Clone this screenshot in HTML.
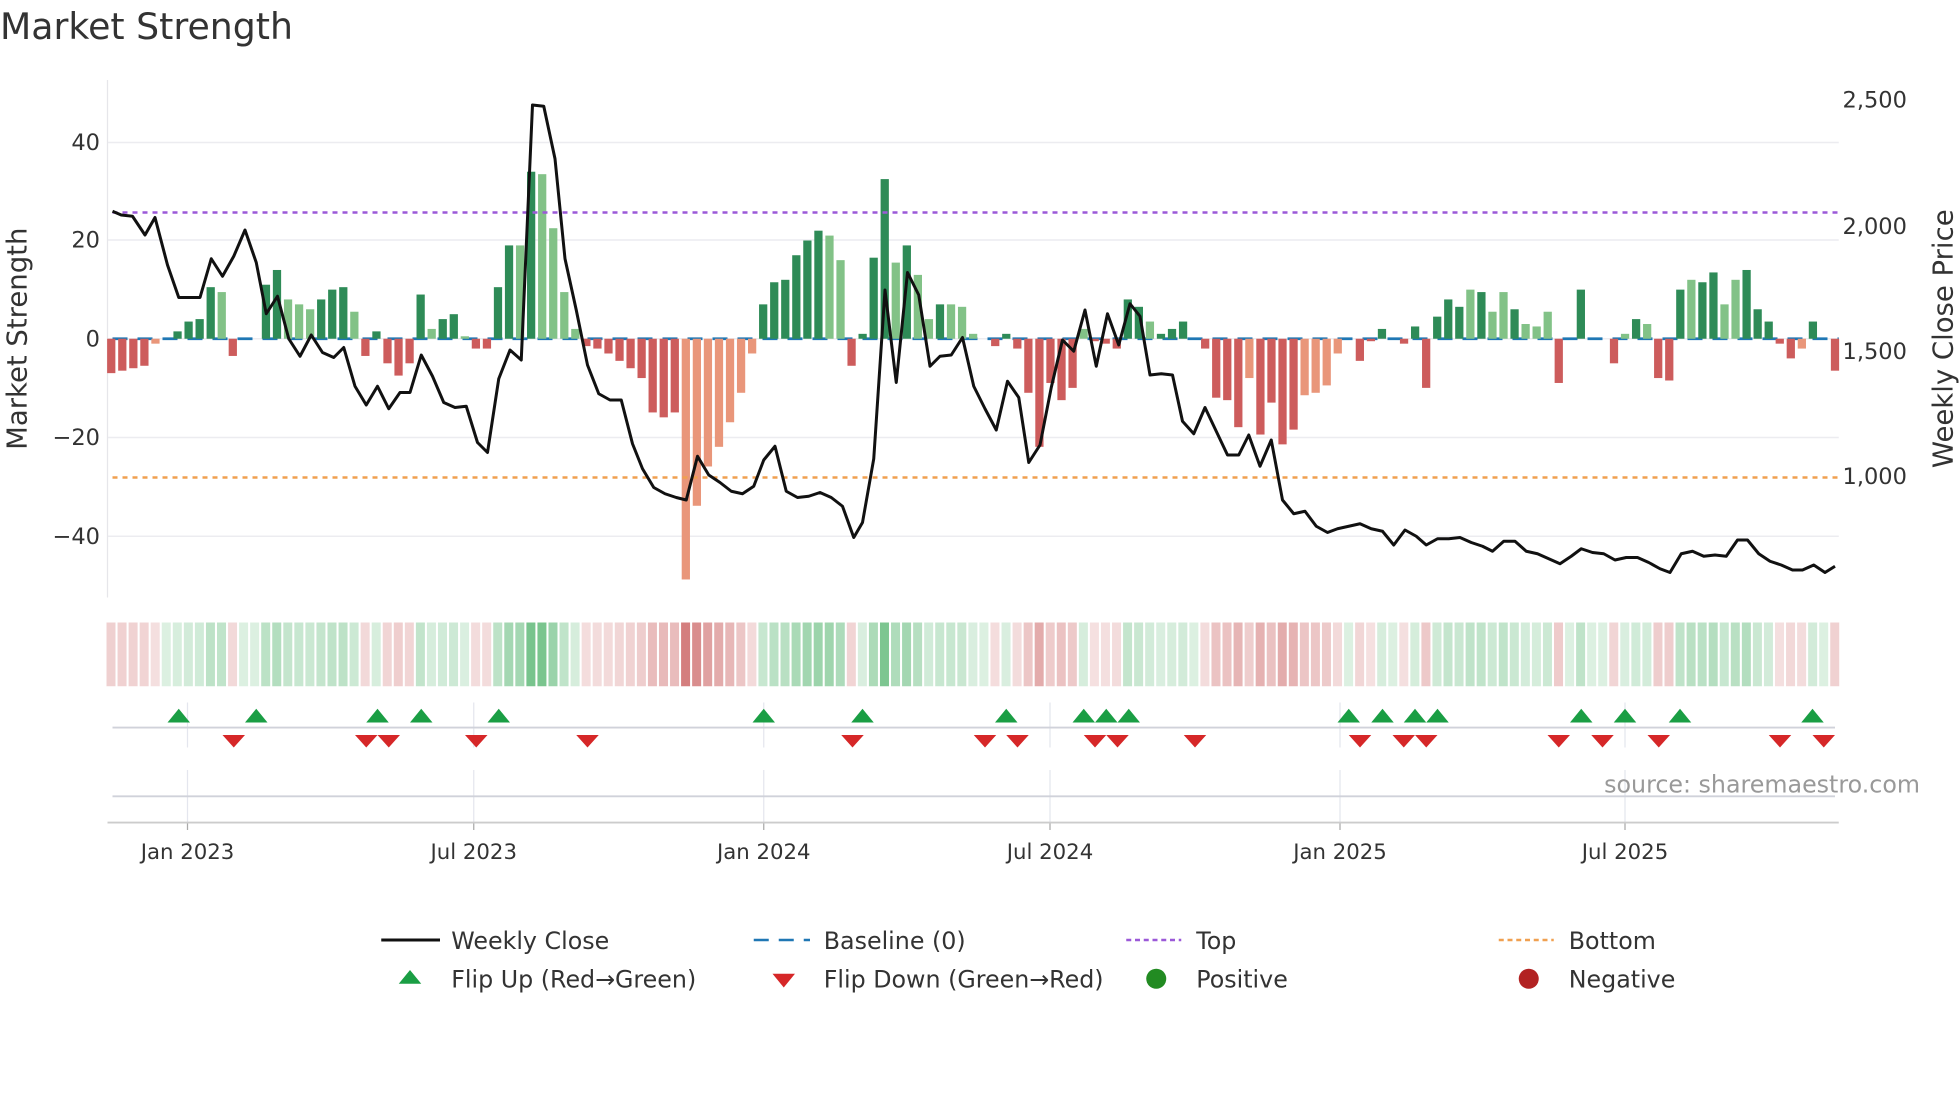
<!DOCTYPE html>
<html><head><meta charset="utf-8"><style>
html,body{margin:0;padding:0;background:#fff;}
svg{display:block;font-family:"DejaVu Sans","Liberation Sans",sans-serif;}
</style></head><body>
<svg id="s" width="1960" height="1102" viewBox="0 0 1568 881.6" xmlns="http://www.w3.org/2000/svg">
<text x="0" y="31" font-size="29" fill="#333">Market Strength</text>
<g id="g"></g>
</svg>
<script>
const g=document.getElementById('g');
let h='';
function T(x,y,t,o){h+=`<text x="${x}" y="${y}" ${o||''}>${t}</text>`;}
[114,192,271,350,429].forEach(y=>h+=`<line x1="86" x2="1471" y1="${y}" y2="${y}" stroke="#ececf0" stroke-width="1.2"/>`);
h+=`<line x1="86" x2="86" y1="64" y2="478" stroke="#e6e6ea" stroke-width="1"/>`;
[[114,'40'],[192,'20'],[271,'0'],[350,'−20'],[429,'−40']].forEach(a=>T(80,a[0]+6,a[1],'font-size="18" fill="#333" text-anchor="end"'));
[[80,'2,500'],[181,'2,000'],[281,'1,500'],[381,'1,000']].forEach(a=>T(1474,a[0]+6,a[1],'font-size="18" fill="#333"'));
T(0,0,'Market Strength','font-size="22" fill="#333" text-anchor="middle" transform="translate(21,271) rotate(-90)"');
T(0,0,'Weekly Close Price','font-size="22" fill="#333" text-anchor="middle" transform="translate(1562,271) rotate(-90)"');
h+=`<line x1="90" x2="1471" y1="271" y2="271" stroke="#1f77b4" stroke-width="2.2" stroke-dasharray="12,8"/>`;
const v=[-7,-6.5,-6,-5.5,-1,0,1.5,3.5,4,10.5,9.5,-3.5,0,0,11,14,8,7,6,8,10,10.5,5.5,-3.5,1.5,-5,-7.5,-5,9,2,4,5,0.5,-2,-2,10.5,19,19,34,33.5,22.5,9.5,2,-1.5,-2,-3,-4.5,-6,-8,-15,-16,-15,-49,-34,-26,-22,-17,-11,-3,7,11.5,12,17,20,22,21,16,-5.5,1,16.5,32.5,15.5,19,13,4,7,7,6.5,1,0,-1.5,1,-2,-11,-22,-9,-12.5,-10,2,-0.5,-1,-2,8,6.5,3.5,1,2,3.5,0,-2,-12,-12.5,-18,-8,-19.5,-13,-21.5,-18.5,-11.5,-11,-9.5,-3,0,-4.5,-0.5,2,0,-1,2.5,-10,4.5,8,6.5,10,9.5,5.5,9.5,6,3,2.5,5.5,-9,0,10,0,0,-5,1,4,3,-8,-8.5,10,12,11.5,13.5,7,12,14,6,3.5,-1,-4,-2,3.5,0,-6.5];
const n=v.length, x0=89, dx=(1468-89)/(n-1);
const light=new Set([4,10,16,17,18,22,29,32,37,39,40,41,42,52,53,54,55,56,57,58,65,66,71,73,74,76,77,78,88,94,103,108,109,110,111,112,123,125,126,128,129,130,137,139,143,146,147,153]);
v.forEach((a,i)=>{if(Math.abs(a)<0.3)return;const x=x0+i*dx;const y=a>0?271-a*3.93:271;const hh=Math.abs(a)*3.93;
let c;if(a>0)c=light.has(i)?'#82c287':'#2e8b57';else c=light.has(i)?'#e9967a':'#cd5c5c';
h+=`<rect x="${x-3.3}" y="${y}" width="6.6" height="${hh}" fill="${c}"/>`;
const m=Math.min(1,Math.abs(a)/40);const al=0.18+0.6*m;
const hc=a>=0?`rgba(60,170,90,${al})`:`rgba(200,90,90,${al})`;
h+=`<rect x="${x-3.8}" y="498" width="7.2" height="51" fill="${hc}"/>`;});
v.forEach((a,i)=>{if(Math.abs(a)<0.3){const x=x0+i*dx;h+=`<rect x="${x-3.8}" y="498" width="7.2" height="51" fill="rgba(60,170,90,0.18)"/>`;}});
h+=`<line x1="90" x2="1471" y1="170" y2="170" stroke="#9b59d8" stroke-width="2" stroke-dasharray="4,4"/>`;
h+=`<line x1="90" x2="1471" y1="382" y2="382" stroke="#f0a050" stroke-width="2" stroke-dasharray="4,4"/>`;
const p="90,169 97,172 106,173 116,188 124,174 134,212 143,238 160,238 169,207 178,221 187,205 196,184 205,210 213,251 222,237 231,271 240,285 249,268 258,282 267,286 275,278 284,309 293,324 302,309 311,327 320,314 328,314 337,284 346,301 355,322 364,326 373,325 382,354 390,362 399,303 408,280 417,288 426,84 435,85 444,127 452,207 461,248 470,292 479,315 488,320 497,320 506,355 514,375 523,390 532,395 541,398 549,400 558,365 567,380 576,386 585,393 594,395 603,389 611,368 620,357 629,393 638,398 647,397 656,394 665,398 674,405 683,430 690,418 699,367 708,232 717,306 726,218 735,236 744,293 752,285 761,284 770,270 779,309 788,327 797,344 806,305 815,318 823,370 832,356 841,310 850,272 859,281 868,248 877,293 886,251 895,276 904,243 912,253 920,300 929,299 938,300 946,337 955,347 964,326 973,345 982,364 991,364 999,348 1008,373 1017,352 1026,400 1035,411 1044,409 1053,421 1062,426 1070,423 1079,421 1088,419 1097,423 1106,425 1115,436 1124,424 1133,429 1141,436 1150,431 1159,431 1168,430 1177,434 1186,437 1194,441 1203,433 1212,433 1221,441 1230,443 1239,447 1248,451 1257,445 1265,439 1274,442 1283,443 1292,448 1301,446 1310,446 1319,450 1328,455 1336,458 1345,443 1354,441 1363,445 1372,444 1381,445 1390,432 1398,432 1407,443 1416,449 1425,452 1434,456 1442,456 1451,452 1460,458 1468,453";
h+=`<polyline points="${p}" fill="none" stroke="#111" stroke-width="2.4" stroke-linejoin="round"/>`;
const ticks=[[150,'Jan 2023'],[379,'Jul 2023'],[611,'Jan 2024'],[840,'Jul 2024'],[1072,'Jan 2025'],[1300,'Jul 2025']];
ticks.forEach(t=>{h+=`<line x1="${t[0]}" x2="${t[0]}" y1="562" y2="598" stroke="#e4e6ee"/><line x1="${t[0]}" x2="${t[0]}" y1="616" y2="658" stroke="#e4e6ee"/><line x1="${t[0]}" x2="${t[0]}" y1="658" y2="664" stroke="#aaa"/>`;T(t[0],687,t[1],'font-size="17" fill="#333" text-anchor="middle"');});
h+=`<line x1="90" x2="1468" y1="582" y2="582" stroke="#d0d2da" stroke-width="1.5"/><line x1="90" x2="1468" y1="637" y2="637" stroke="#d0d2da" stroke-width="1.5"/><line x1="86" x2="1471" y1="658" y2="658" stroke="#ccc" stroke-width="1.5"/>`;
[143,205,302,337,399,611,690,805,867,885,903,1079,1106,1132,1150,1265,1300,1344,1450].forEach(x=>h+=`<polygon points="${x-9},578 ${x+9},578 ${x},567" fill="#1a9e44"/>`);
[187,293,311,381,470,682,788,814,876,894,956,1088,1123,1141,1247,1282,1327,1424,1459].forEach(x=>h+=`<polygon points="${x-9},588 ${x+9},588 ${x},598" fill="#d62728"/>`);
T(1536,634,'source: sharemaestro.com','font-size="19" fill="#999" text-anchor="end"');
const L='font-size="19" fill="#333"';
h+=`<line x1="305" x2="352" y1="752" y2="752" stroke="#111" stroke-width="2.4"/>`;T(361,759,'Weekly Close',L);
h+=`<line x1="603" x2="648" y1="752" y2="752" stroke="#1f77b4" stroke-width="2" stroke-dasharray="12,8"/>`;T(659,759,'Baseline (0)',L);
h+=`<line x1="901" x2="945" y1="752" y2="752" stroke="#9b59d8" stroke-width="2" stroke-dasharray="4,3"/>`;T(957,759,'Top',L);
h+=`<line x1="1199" x2="1243" y1="752" y2="752" stroke="#f0a050" stroke-width="2" stroke-dasharray="4,3"/>`;T(1255,759,'Bottom',L);
h+=`<polygon points="319,787 337,787 328,776" fill="#1a9e44"/>`;T(361,790,'Flip Up (Red→Green)',L);
h+=`<polygon points="618,779 636,779 627,790" fill="#d62728"/>`;T(659,790,'Flip Down (Green→Red)',L);
h+=`<circle cx="925" cy="783" r="8" fill="#228b22"/>`;T(957,790,'Positive',L);
h+=`<circle cx="1223" cy="783" r="8" fill="#b22222"/>`;T(1255,790,'Negative',L);
g.innerHTML=h;
</script>
</body></html>
